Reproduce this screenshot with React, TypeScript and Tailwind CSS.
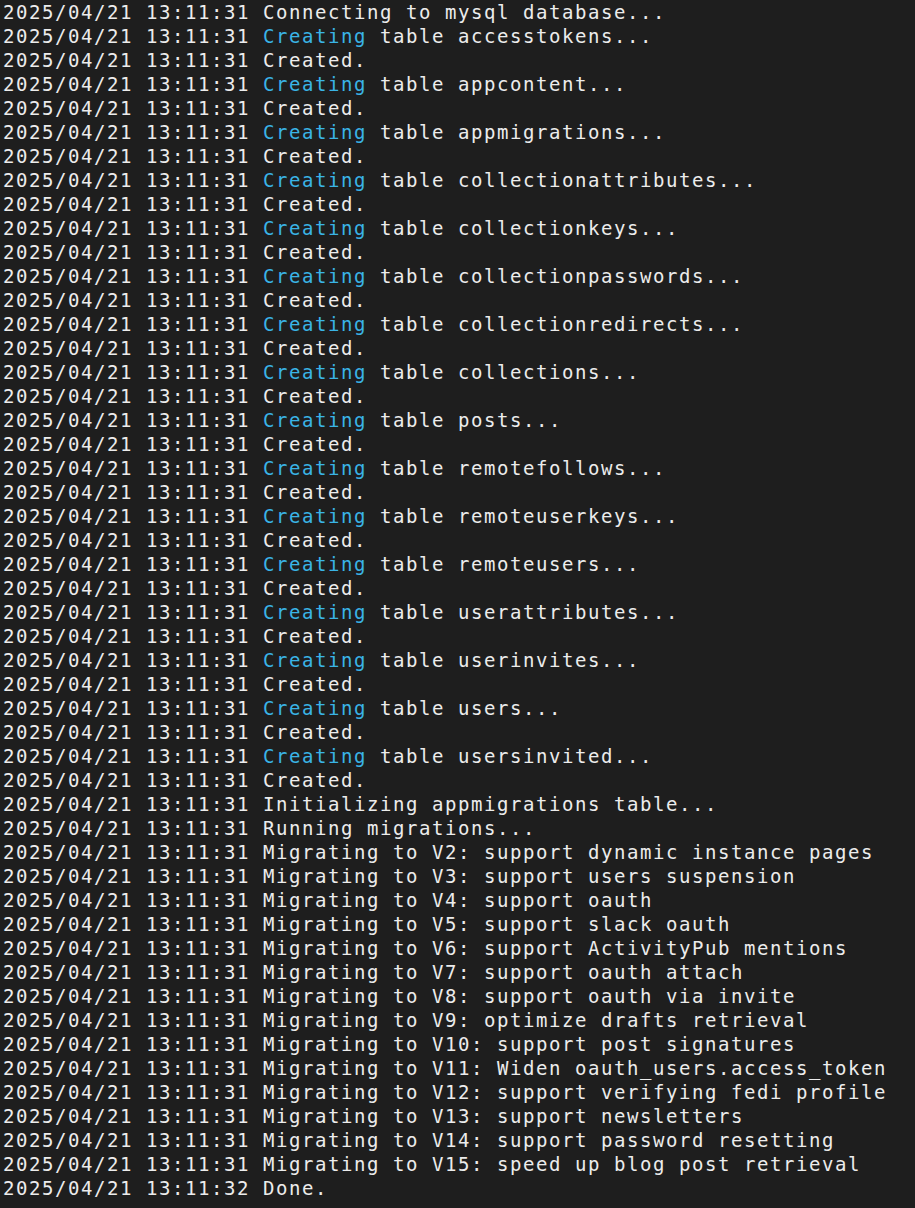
import React from "react";

type Line = { ts?: string; cyan?: string; rest: string };

const tables = [
  "accesstokens",
  "appcontent",
  "appmigrations",
  "collectionattributes",
  "collectionkeys",
  "collectionpasswords",
  "collectionredirects",
  "collections",
  "posts",
  "remotefollows",
  "remoteuserkeys",
  "remoteusers",
  "userattributes",
  "userinvites",
  "users",
  "usersinvited",
];

const migrations = [
  "V2: support dynamic instance pages",
  "V3: support users suspension",
  "V4: support oauth",
  "V5: support slack oauth",
  "V6: support ActivityPub mentions",
  "V7: support oauth attach",
  "V8: support oauth via invite",
  "V9: optimize drafts retrieval",
  "V10: support post signatures",
  "V11: Widen oauth_users.access_token",
  "V12: support verifying fedi profile",
  "V13: support newsletters",
  "V14: support password resetting",
  "V15: speed up blog post retrieval",
];

const lines: Line[] = [
  { rest: "Connecting to mysql database..." },
  ...tables.flatMap((t) => [
    { cyan: "Creating", rest: ` table ${t}...` },
    { rest: "Created." },
  ]),
  { rest: "Initializing appmigrations table..." },
  { rest: "Running migrations..." },
  ...migrations.map((m) => ({ rest: `Migrating to ${m}` })),
  { ts: "2025/04/21 13:11:32 ", rest: "Done." },
];

export default function App() {
  return (
    <div
      className="w-[915px] h-[1208px] bg-[#1e1e1e] text-[#ececec] pl-[3px] overflow-hidden"
      style={{ fontFamily: '"DejaVu Sans Mono", monospace' }}
    >
      <div className="flex flex-col text-[19px] leading-[24px] tracking-[1.56px] whitespace-pre">
        {lines.map((l, i) => (
          <div key={i} className="h-[24px]">
            <span>{l.ts ?? "2025/04/21 13:11:31 "}</span>
            {l.cyan && <span className="text-[#3ab4e6]">{l.cyan}</span>}
            <span>{l.rest}</span>
          </div>
        ))}
      </div>
    </div>
  );
}
